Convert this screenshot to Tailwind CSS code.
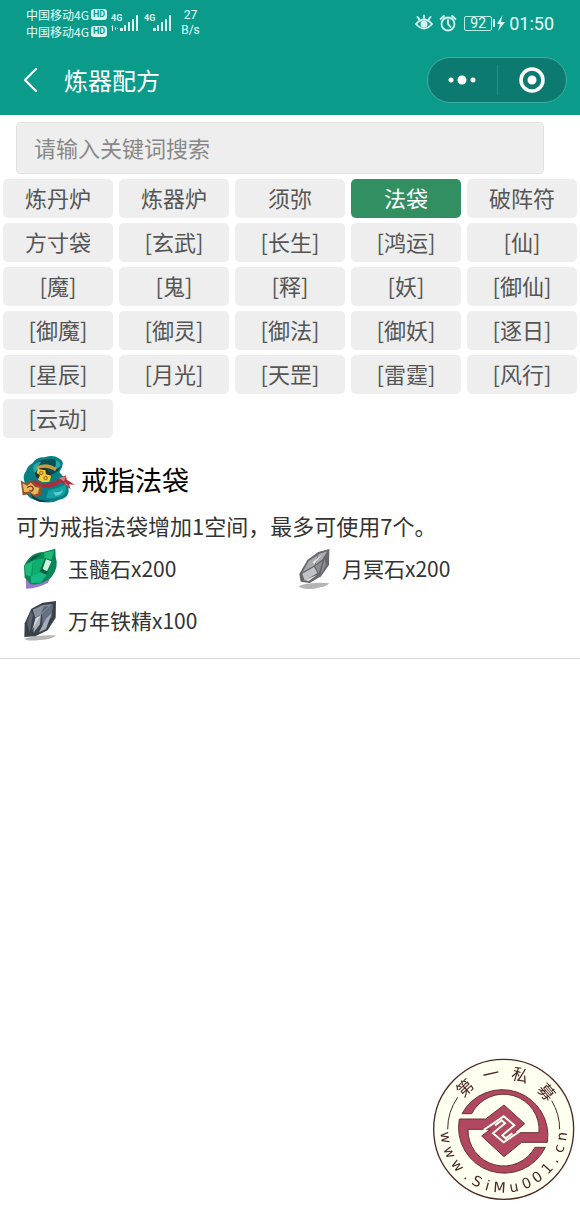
<!DOCTYPE html>
<html lang="zh-CN">
<head>
    <meta charset="UTF-8">
    <meta name="viewport" content="width=device-width, initial-scale=1.0">
    <title>炼器配方</title>
    <script src="https://cdn.jsdelivr.net/npm/@tailwindcss/browser@4"></script>
</head>
<body class="min-h-screen bg-white font-['Noto_Sans_CJK_SC',sans-serif] text-[#333]">
    <!-- Header -->
    <header class="bg-[#0a9b8b] text-[#e6fffb]">
        <!-- Status bar -->
        <div class="flex h-[46px] items-center justify-between px-[26px]">
            <div class="flex items-center">
                <div class="text-[12px] leading-[17px]">
                    <div class="flex items-center gap-[2px]">
                        <span>中国移动4G</span>
                        <span class="rounded-[3px] bg-[#d9f5f1] px-[2px] font-['Roboto',sans-serif] text-[9px] leading-[11px] font-bold text-[#0a9b8b]">HD</span>
                    </div>
                    <div class="flex items-center gap-[2px]">
                        <span>中国移动4G</span>
                        <span class="rounded-[3px] bg-[#d9f5f1] px-[2px] font-['Roboto',sans-serif] text-[9px] leading-[11px] font-bold text-[#0a9b8b]">HD</span>
                    </div>
                </div>
                <svg class="ml-1 h-5 w-[62px]" viewBox="0 0 62 20" fill="#d9f5f1">
                    <text x="0" y="8" font-family="Roboto" font-size="9" font-weight="700">4G</text>
                    <path d="M0 14l2-2v6H1v-4zM4 14h1v3H4zM6 15h1v1H6zM9 15h3v3H9zM13 12h2v6h-2zM17 9h2v9h-2zM21 6h2v12h-2zM25 2h2v16h-2z"/>
                    <text x="33" y="8" font-family="Roboto" font-size="9" font-weight="700">4G</text>
                    <path d="M42 15h3v3h-3zM46 12h2v6h-2zM50 9h2v9h-2zM54 6h2v12h-2zM58 2h2v16h-2z"/>
                </svg>
                <div class="ml-2 text-center font-['Roboto',sans-serif] text-[12px] leading-[15px]">
                    <div>27</div>
                    <div>B/s</div>
                </div>
            </div>
            <div class="flex items-center">
                <svg class="h-5 w-[18px]" viewBox="0 0 18 20" fill="none" stroke="#d9f5f1" stroke-width="1.8" stroke-linecap="round">
                    <path d="M1 11q8-9 16 0q-8 9-16 0zM9 6V2.500M4.500 6.800L2.500 4M13.500 6.800l2-2.800"/>
                    <circle cx="9" cy="11" r="2.600" fill="#d9f5f1"/>
                </svg>
                <svg class="ml-[6px] h-5 w-[18px]" viewBox="0 0 18 20" fill="none" stroke="#d9f5f1" stroke-width="1.8" stroke-linecap="round">
                    <circle cx="9" cy="11" r="6.500"/>
                    <path d="M9 7v4l2.500 3M1.500 6l3.500-3M16.500 6L13 3"/>
                </svg>
                <div class="ml-[7px] flex h-[15px] w-7 items-center justify-center rounded-[2px] border border-[#b8ebe4] font-['Roboto',sans-serif] text-[14px]">92</div>
                <svg class="ml-[1px] h-4 w-3" viewBox="0 0 12 16" fill="#d9f5f1">
                    <path d="M0 4h2v8H0zM9.500 0L4 9h3l-2 7 7-9H8z"/>
                </svg>
                <span class="ml-1 font-['Roboto',sans-serif] text-[18px]">01:50</span>
            </div>
        </div>

        <!-- Nav bar -->
        <div class="flex h-[69px] items-center pr-[13px] pb-[2px] pl-[22px] text-white">
            <button type="button" aria-label="返回" class="w-[42px]">
                <svg class="h-6 w-[18px]" viewBox="0 0 18 24" fill="none" stroke="currentColor" stroke-width="2.200" stroke-linecap="round" stroke-linejoin="round">
                    <path d="M14 1L3 12l11 11"/>
                </svg>
            </button>
            <h1 class="text-[24px] leading-8">炼器配方</h1>
            <div class="ml-auto flex h-[46px] w-[140px] items-center rounded-full border border-[#3fafa3] bg-[#0c7a70]">
                <button type="button" aria-label="更多" class="flex flex-1 justify-center">
                    <svg class="h-[10px] w-7" viewBox="0 0 28 10" fill="#fff">
                        <circle cx="3" cy="5" r="2.500"/>
                        <circle cx="14" cy="5" r="4.500"/>
                        <circle cx="25" cy="5" r="2.500"/>
                    </svg>
                </button>
                <span class="h-[30px] w-px bg-[#2a8d83]"></span>
                <button type="button" aria-label="关闭" class="flex flex-1 justify-center">
                    <svg class="h-7 w-7" viewBox="0 0 28 28" fill="#fff">
                        <circle cx="14" cy="14" r="11" fill="none" stroke="#fff" stroke-width="3.500"/>
                        <circle cx="14" cy="14" r="4.500"/>
                    </svg>
                </button>
            </div>
        </div>
    </header>

    <main>
        <!-- Search -->
        <div class="pt-[7px] pr-[36px] pb-[5px] pl-4">
            <input type="search" aria-label="搜索" placeholder="请输入关键词搜索" class="block h-[52px] w-full rounded-[4px] border border-[#e2e2e2] bg-[#eee] px-[17px] pb-[2px] text-[22px] placeholder:text-[#888]">
        </div>

        <!-- Categories -->
        <div class="grid grid-cols-5 gap-x-[6px] gap-y-[5px] px-[3px] text-[22px] leading-[37px] text-[#555]">
            <button type="button" class="rounded-[5px] bg-[#eee] pb-[2px]">炼丹炉</button>
            <button type="button" class="rounded-[5px] bg-[#eee] pb-[2px]">炼器炉</button>
            <button type="button" class="rounded-[5px] bg-[#eee] pb-[2px]">须弥</button>
            <button type="button" class="rounded-[5px] bg-[#318f62] pb-[2px] text-white">法袋</button>
            <button type="button" class="rounded-[5px] bg-[#eee] pb-[2px]">破阵符</button>
            <button type="button" class="rounded-[5px] bg-[#eee] pb-[2px]">方寸袋</button>
            <button type="button" class="rounded-[5px] bg-[#eee] pb-[2px]">[玄武]</button>
            <button type="button" class="rounded-[5px] bg-[#eee] pb-[2px]">[长生]</button>
            <button type="button" class="rounded-[5px] bg-[#eee] pb-[2px]">[鸿运]</button>
            <button type="button" class="rounded-[5px] bg-[#eee] pb-[2px]">[仙]</button>
            <button type="button" class="rounded-[5px] bg-[#eee] pb-[2px]">[魔]</button>
            <button type="button" class="rounded-[5px] bg-[#eee] pb-[2px]">[鬼]</button>
            <button type="button" class="rounded-[5px] bg-[#eee] pb-[2px]">[释]</button>
            <button type="button" class="rounded-[5px] bg-[#eee] pb-[2px]">[妖]</button>
            <button type="button" class="rounded-[5px] bg-[#eee] pb-[2px]">[御仙]</button>
            <button type="button" class="rounded-[5px] bg-[#eee] pb-[2px]">[御魔]</button>
            <button type="button" class="rounded-[5px] bg-[#eee] pb-[2px]">[御灵]</button>
            <button type="button" class="rounded-[5px] bg-[#eee] pb-[2px]">[御法]</button>
            <button type="button" class="rounded-[5px] bg-[#eee] pb-[2px]">[御妖]</button>
            <button type="button" class="rounded-[5px] bg-[#eee] pb-[2px]">[逐日]</button>
            <button type="button" class="rounded-[5px] bg-[#eee] pb-[2px]">[星辰]</button>
            <button type="button" class="rounded-[5px] bg-[#eee] pb-[2px]">[月光]</button>
            <button type="button" class="rounded-[5px] bg-[#eee] pb-[2px]">[天罡]</button>
            <button type="button" class="rounded-[5px] bg-[#eee] pb-[2px]">[雷霆]</button>
            <button type="button" class="rounded-[5px] bg-[#eee] pb-[2px]">[风行]</button>
            <button type="button" class="rounded-[5px] bg-[#eee] pb-[2px]">[云动]</button>
        </div>

        <!-- Recipe -->
        <section class="border-b border-[#ddd] px-4 pt-[15px] pb-3">
            <div class="flex items-center gap-[5px]">
                <svg class="h-[54px] w-[60px]" viewBox="0 0 180 162">
                    <path d="M50 30q10-18 36-17 25-10 42 3 18 8 10 27l-8 15q30 28 28 58-4 20-28 24-30 16-62 3-34-3-38-28-6-8-4-26-8-22 4-34 4-16 20-25z" fill="#087f85"/>
                    <path d="M54 36q30-26 70-14 16 8 8 24-10 16-30 20-38 4-48-30z" fill="#064f58"/>
                    <path d="M52 38q10-12 24-12-16 18-8 42-20-8-16-30zM118 20q18 4 16 18-8 10-22 10 12-12 6-28z" fill="#22a9a8"/>
                    <path d="M60 42q30-18 62 4l-4 8q-32-18-54-4z" fill="#c99b3c"/>
                    <path d="M66 50q12-10 28 0l14 20-16 16-30-12-6-14z" fill="#302b28"/>
                    <path d="M66 48l22 4 2 12 16 4-6 18-20 2-14-8 6-14-10-6z" fill="#f2cf39"/>
                    <circle cx="76" cy="60" r="5" fill="none" stroke="#8a6414" stroke-width="3"/>
                    <circle cx="89" cy="75" r="5" fill="none" stroke="#8a6414" stroke-width="3"/>
                    <path d="M50 78q42 28 88-6l12-5 2 13 24 15-17-1 5 15-28-22q-38 30-84 10z" fill="#a72f3c"/>
                    <path d="M128 75l22-5-6 15zM142 84l20 16-10-3z" fill="#e87578"/>
                    <path d="M98 112q28-6 52-18 4 36-24 38-20 6-36 2z" fill="#14a0a5"/>
                    <path d="M112 116q18 6 30-8-4 20-24 20z" fill="#5ad2ce"/>
                    <path d="M42 115q18 34 60 27-34 14-54-10z" fill="#053d49"/>
                    <path d="M14 82l16 10 14-10 16 14 18 3-2 26-18 8-14-10-24 4z" fill="#96502a"/>
                    <path d="M20 91l13 7 12-9 12 13 13 2-4 17-12 4-12-9-18 1z" fill="#e9b95d"/>
                    <path d="M34 104q12-10 18 2-2 12-12 6" fill="none" stroke="#7f3821" stroke-width="4"/>
                </svg>
                <h2 class="text-[27px] leading-[40px] text-black">戒指法袋</h2>
            </div>
            <p class="mt-[2px] text-[22px] leading-[32px]">可为戒指法袋增加1空间，最多可使用7个。</p>
            <ul class="mt-[1px] grid grid-cols-2 text-[21px] leading-[52px]">
                <li class="flex items-center gap-2">
                    <svg class="h-11 w-11" viewBox="0 0 132 132">
                        <path d="M30 82L30 128q38-2 66-18l22-48z" fill="#9a79c9"/>
                        <path d="M24 60Q44 18 82 18l36-10 1 24q11 32-13 62-26 24-62 21L26 95z" fill="#088858"/>
                        <path d="M84 20l30-6-8 28-20-5zM26 58l25-14-6 46-15-2z" fill="#21ba78"/>
                        <path d="M51 43l36-7-16 43-22 12z" fill="#0caf70"/>
                        <path d="M87 37l22 7-19 42-19-9z" fill="#065f43"/>
                        <path d="M90 40l17 6-14 30-13-7z" fill="#c9f4dc"/>
                        <path d="M44 91l29-12 19 8-18 23-28 1z" fill="#18b983"/>
                        <path d="M50 32l28-10-26 20-18 8z" fill="#075b42"/>
                    </svg>
                    玉髓石x200
                </li>
                <li class="flex items-center gap-2">
                    <svg class="h-11 w-11" viewBox="0 0 132 132">
                        <path d="M26 120q40-14 92-8-8 11-46 16-38 4-46-8z" fill="#b5b5b5"/>
                        <path d="M28 84L52 42l33-24 33-9-1 48-24 34-34 20-27-4z" fill="#66666b"/>
                        <path d="M38 78l18-33 28-18-10 31zM86 24l26-8-15 24-20 16z" fill="#a9aab0"/>
                        <path d="M37 83l35-20 10 18-38 23z" fill="#c1c1c7"/>
                        <path d="M75 60l23-14-12 36zM104 38l4 20-17 29z" fill="#8c8d94"/>
                        <path d="M46 102l36-16-27 20zM67 49L96 26 73 54z" fill="#e2e2e4"/>
                    </svg>
                    月冥石x200
                </li>
                <li class="flex items-center gap-2">
                    <svg class="h-11 w-11" viewBox="0 0 132 132">
                        <path d="M24 122q40-12 96-10-8 12-50 14-34 5-46-4z" fill="#b7b7b7"/>
                        <path d="M26 76L46 32l34-18 40-5-1 50-24 38-37 18-33 2z" fill="#3b4148"/>
                        <path d="M50 35l29-13 30-4-29 29-22 12z" fill="#8690a0"/>
                        <path d="M78 48l33-31-4 41-28 24z" fill="#657080"/>
                        <path d="M57 62l18-12-3 29-20 26zM90 62l17-16-17 47-21 10z" fill="#a4adba"/>
                        <path d="M33 73l12-33 6 10-10 52zM83 26l16-3-24 24z" fill="#596470"/>
                        <path d="M60 59l13-5-25 43z" fill="#d1d6de"/>
                    </svg>
                    万年铁精x100
                </li>
            </ul>
        </section>
    </main>

    <!-- Site badge -->
    <svg class="fixed right-0 bottom-0 h-[155px] w-[155px]" viewBox="0 0 465 465" role="img" aria-label="第一私募 www.SiMu001.cn">
        <circle cx="236" cy="238" r="210" fill="#fffff0" stroke="#4b2824" stroke-width="4"/>
        <g fill="none" stroke="#4b2824" stroke-width="3">
            <path d="M68 238A168 168 0 0 1 98 142M404 238A168 168 0 0 0 380 152"/>
        </g>
        <g fill="#b04860" stroke="#6d3038" stroke-width="3">
            <path d="M111 191A137 137 0 0 1 367 277H290L237 320 170 258 196 238H129A107 107 0 0 0 330 292H361A137 137 0 0 1 103 207H182L237 165 299 221 268 248H342A107 107 0 0 0 140 191Z"/>
        </g>
        <g fill="none" stroke="#fffff0" stroke-width="6">
            <path d="M176 240L236 199 268 226 232 256 242 265 262 250"/>
            <path d="M296 236L236 277 204 250 240 220 230 211 210 226"/>
        </g>
        <g fill="#4b2824" font-family="'Noto Sans CJK SC', sans-serif" font-size="50" text-anchor="middle">
            <text x="236" y="86" transform="rotate(-43 236 238)">第</text>
            <text x="236" y="86" transform="rotate(-13 236 238)">一</text>
            <text x="236" y="86" transform="rotate(17 236 238)">私</text>
            <text x="236" y="86" transform="rotate(49 236 238)">募</text>
        </g>
        <g fill="#4b2824" font-family="'DejaVu Sans', sans-serif" font-size="43" text-anchor="middle">
            <text x="236" y="428" transform="rotate(82 236 238)">w</text>
            <text x="236" y="428" transform="rotate(67 236 238)">w</text>
            <text x="236" y="428" transform="rotate(52 236 238)">w</text>
            <text x="236" y="428" transform="rotate(38 236 238)">.</text>
            <text x="236" y="428" transform="rotate(27 236 238)">S</text>
            <text x="236" y="428" transform="rotate(16 236 238)">i</text>
            <text x="236" y="428" transform="rotate(4 236 238)">M</text>
            <text x="236" y="428" transform="rotate(-10 236 238)">u</text>
            <text x="236" y="428" transform="rotate(-23 236 238)">0</text>
            <text x="236" y="428" transform="rotate(-35 236 238)">0</text>
            <text x="236" y="428" transform="rotate(-48 236 238)">1</text>
            <text x="236" y="428" transform="rotate(-59 236 238)">.</text>
            <text x="236" y="428" transform="rotate(-71 236 238)">c</text>
            <text x="236" y="428" transform="rotate(-83 236 238)">n</text>
        </g>
    </svg>
</body>
</html>
